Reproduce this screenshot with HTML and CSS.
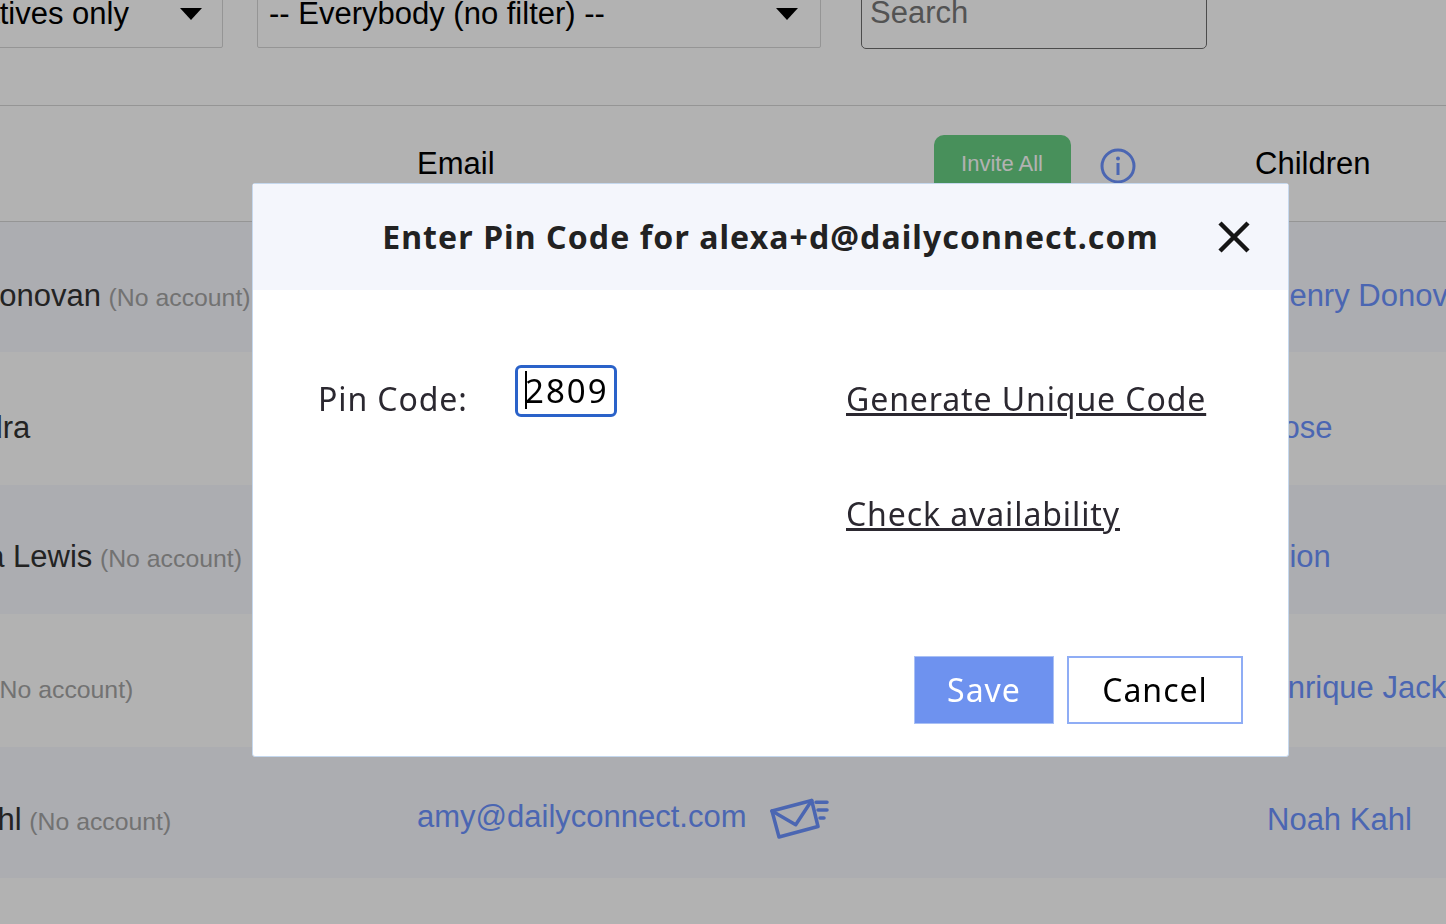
FILE: index.html
```html
<!DOCTYPE html>
<html lang="en">
<head>
  <meta charset="UTF-8">
  <meta name="viewport" content="width=device-width, initial-scale=1.0">
  <title>Parents</title>
  <link rel="stylesheet" href="styles.css">
</head>
<body>
  <div class="page">
    <div class="filters">
      <div class="select select-type">
        <span>Relatives only</span>
        <span class="caret"></span>
      </div>
      <div class="select select-group">
        <span>-- Everybody (no filter) --</span>
        <span class="caret"></span>
      </div>
      <input class="search" type="text" placeholder="Search">
    </div>

    <div class="table-head">
      <div></div>
      <div class="email-head">
        <span>Email</span>
        <button class="invite-all">Invite All</button>
        <svg class="info-icon" viewBox="0 0 36 36" width="36" height="36">
          <circle cx="18" cy="18" r="16" fill="none" stroke="#6c93ff" stroke-width="3"/>
          <circle cx="18" cy="10.5" r="2" fill="#6c93ff"/>
          <rect x="16.5" y="15" width="3" height="12" fill="#6c93ff"/>
        </svg>
      </div>
      <div>Children</div>
    </div>

    <div class="rows">
      <div class="row tinted">
        <div class="name">Laura Donovan <small>(No account)</small></div>
        <div></div>
        <a class="child" href="#">Henry Donovan</a>
      </div>
      <div class="row">
        <div class="name">Jo Sandra</div>
        <div></div>
        <a class="child" href="#">Jose</a>
      </div>
      <div class="row tinted">
        <div class="name">Amanda Lewis <small>(No account)</small></div>
        <div></div>
        <a class="child" href="#">Dion</a>
      </div>
      <div class="row">
        <div class="name">Amy Li <small>(No account)</small></div>
        <div></div>
        <a class="child" href="#">Enrique Jackson</a>
      </div>
      <div class="row tinted">
        <div class="name">Amy Kahl <small>(No account)</small></div>
        <div class="email-cell">
          <a href="#">amy@dailyconnect.com</a>
          <svg class="invite-icon" viewBox="0 0 60 44" width="60" height="44">
            <g fill="none" stroke="#6c93ff" stroke-width="3.5" stroke-linejoin="round" stroke-linecap="round">
              <path d="M2 13 41.7 2.5 48 28.5 9 39Z"/>
              <path d="M2 13 25.7 26.7 41.7 2.5"/>
              <path d="M46 4.3H57M48 12H57M50 20H54"/>
            </g>
          </svg>
        </div>
        <a class="child" href="#">Noah Kahl</a>
      </div>
    </div>
  </div>

  <div class="overlay">
    <div class="modal">
      <div class="modal-header">
        <div></div>
        <h2>Enter Pin Code for alexa+d@dailyconnect.com</h2>
        <svg class="close" viewBox="0 0 32 32" width="32" height="32">
          <path d="M2 2 30 30M30 2 2 30" fill="none" stroke="#151515" stroke-width="4.5"/>
        </svg>
      </div>
      <div class="modal-body">
        <label class="pin-label" for="pin">Pin Code:</label>
        <div class="pin-box">
          <input id="pin" class="pin-input" type="text" value="2809">
          <span class="pin-caret"></span>
        </div>
        <div class="pin-links">
          <a href="#">Generate Unique Code</a>
          <a href="#">Check availability</a>
        </div>
      </div>
      <div class="modal-footer">
        <button class="btn btn-save">Save</button>
        <button class="btn btn-cancel">Cancel</button>
      </div>
    </div>
  </div>
</body>
</html>
```

FILE: styles.css
```css
html,
body {
  height: 100%;
}

body {
  margin: 0;
  overflow: hidden;
  background-color: #fff;
  font-family: "Liberation Sans", Arial, sans-serif;
  font-size: 31px;
  color: #000;
}

a {
  color: #6c93ff;
  text-decoration: none;
}

/* Page behind the dialog, scrolled up and to the right */
.page {
  margin: -30px 0 0 -111px;
}

.filters {
  display: flex;
  align-items: flex-end;
  height: 78px;
  padding: 0 0 57px 35px;
  border-bottom: 1px solid #d6d6d6;
}

.select {
  display: flex;
  align-items: center;
  justify-content: space-between;
  box-sizing: border-box;
  height: 78px;
  padding: 10px 20px 0 11px;
  border: 1px solid #d6d6d6;
  border-radius: 2px;
  white-space: nowrap;
}

.select-type {
  width: 299px;
}

.select-group {
  width: 564px;
  margin-left: 34px;
  padding-right: 22px;
}

.caret {
  width: 0;
  height: 0;
  border-left: 11px solid transparent;
  border-right: 11px solid transparent;
  border-top: 12px solid #000;
}

.search {
  box-sizing: border-box;
  width: 346px;
  height: 79px;
  margin: 0 0 -1px 40px;
  padding: 6px 8px 0;
  border: 1px solid #6e6e6e;
  border-radius: 5px;
  background: transparent;
  font-family: inherit;
  font-size: 31px;
}

.search::placeholder {
  color: #777;
}

.table-head {
  display: grid;
  grid-template-columns: 528px 838px 1fr;
  align-items: center;
  height: 115px;
  border-bottom: 1px solid #d6d6d6;
}

.email-head {
  display: flex;
  align-items: center;
  height: 100%;
}

.invite-all {
  width: 137px;
  height: 58px;
  margin-left: 439px;
  border: none;
  border-radius: 10px;
  background-color: #67ce83;
  color: #fff;
  font-family: inherit;
  font-size: 22px;
}

.info-icon {
  margin: 4px 0 0 29px;
}

.row {
  display: grid;
  grid-template-columns: 528px 839px 1fr;
  align-items: center;
  box-sizing: border-box;
  padding-top: 15px;
  white-space: nowrap;
}

.row:nth-child(1) { height: 130px; padding-top: 18px; }
.row:nth-child(2) { height: 133px; padding-top: 18px; }
.row:nth-child(3) { height: 129px; }
.row:nth-child(4) { height: 133px; }
.row:nth-child(5) { height: 131px; }

.tinted {
  background-color: #f7f8fe;
}

.name {
  color: #333;
}

.name small {
  margin-left: -1px;
  font-size: 24.8px;
  color: #a4a4a4;
}

.child {
  padding-left: 11px;
}

.email-cell {
  display: flex;
  align-items: center;
  margin-top: -7px;
}

.invite-icon {
  margin: 6px 0 0 23px;
}

/* Dialog */
.overlay {
  position: fixed;
  top: 0;
  left: 0;
  right: 0;
  bottom: 0;
  display: flex;
  align-items: flex-start;
  padding: 183px 0 0 252px;
  background-color: rgba(0, 0, 0, 0.3);
}

.modal {
  display: flex;
  flex-direction: column;
  box-sizing: border-box;
  width: 1037px;
  height: 574px;
  border: 1px solid #c5d8ee;
  border-radius: 3px;
  background-color: #fff;
  font-family: "Noto Sans", "Open Sans", sans-serif;
  color: #2b2830;
}

.modal-header {
  display: grid;
  grid-template-columns: 1fr auto 1fr;
  align-items: center;
  height: 106px;
  padding: 0 38px;
  background-color: #f4f6fc;
}

.modal-header h2 {
  margin: -2px 0 0;
  font-size: 32px;
  font-weight: 700;
  letter-spacing: 1.1px;
  color: #222;
  white-space: nowrap;
}

.close {
  justify-self: end;
}

.modal-body {
  display: grid;
  grid-template-columns: 197px 331px 1fr;
  align-items: start;
  padding: 75px 0 0 65px;
}

.pin-label {
  margin-top: 12px;
  font-size: 32px;
  line-height: 44px;
  letter-spacing: 0.9px;
}

.pin-box {
  position: relative;
  width: 102px;
  height: 52px;
}

.pin-input {
  box-sizing: border-box;
  width: 102px;
  height: 52px;
  padding: 0 0 2px 7px;
  border: 3px solid #2a62c9;
  border-radius: 6px;
  outline: none;
  font-family: inherit;
  font-size: 33px;
  letter-spacing: 2px;
  color: #000;
}

.pin-caret {
  position: absolute;
  top: 6px;
  left: 10px;
  width: 2px;
  height: 38px;
  background-color: #000;
}

.pin-links {
  display: flex;
  flex-direction: column;
  gap: 71px;
  margin-top: 12px;
  font-size: 32px;
  line-height: 44px;
  letter-spacing: 0.9px;
}

.pin-links a {
  align-self: flex-start;
  color: #2b2830;
  text-decoration: underline;
}

.modal-footer {
  display: flex;
  justify-content: flex-end;
  gap: 13px;
  margin-top: auto;
  padding: 0 45px 32px 0;
}

.btn {
  height: 68px;
  padding: 0 0 1px;
  border: 1px solid #a9c0f5;
  font-family: inherit;
  font-size: 32px;
  letter-spacing: 1px;
}

.btn-save {
  width: 140px;
  background-color: #6e92ef;
  color: #fff;
}

.btn-cancel {
  width: 176px;
  border: 2px solid #8fadf5;
  background-color: #fff;
  color: #000;
}
```
